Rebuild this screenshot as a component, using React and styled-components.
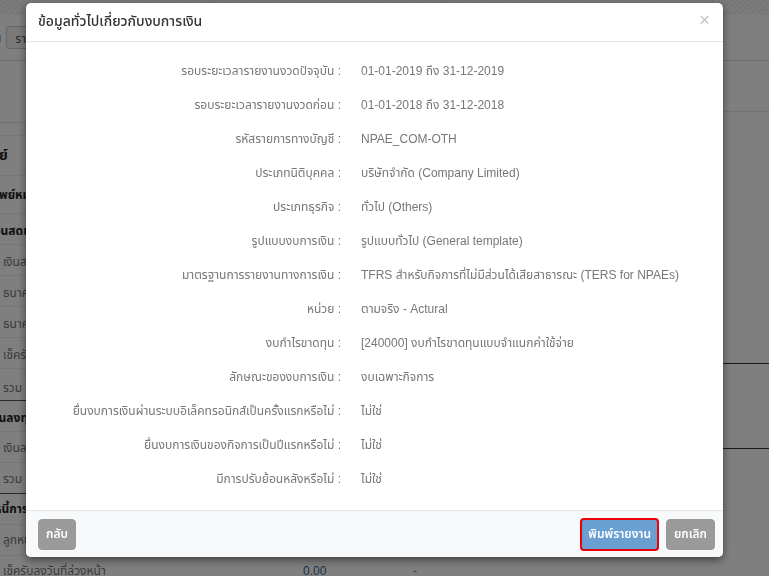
import React from "react";
import styled, { createGlobalStyle } from "styled-components";

const GlobalStyle = createGlobalStyle`
  html, body {
    margin: 0;
    padding: 0;
  }
  body {
    font-family: Tahoma, "Liberation Sans", "Noto Sans Thai", "Noto Sans", sans-serif;
    background: #ffffff;
  }
`;

const Page = styled.div`
  width: 769px;
  height: 576px;
  overflow: hidden;
  background: #ffffff;
`;

const TopStrip = styled.div`
  height: 15px;
  background: repeating-linear-gradient(
    135deg,
    #eeeeee 0px,
    #eeeeee 2px,
    #f8f8f8 2px,
    #f8f8f8 4px
  );
`;

const Toolbar = styled.div`
  display: flex;
  align-items: center;
  gap: 5px;
  height: 45px;
  border-bottom: 1px solid #dddddd;
  font-size: 12px;
`;

const ToolLink = styled.span`
  color: #3b7dc4;
  margin-left: -6px;
`;

const ToolInput = styled.div`
  width: 60px;
  height: 23px;
  border: 1px solid #cccccc;
  border-radius: 3px;
  background: #f5f5f5;
  padding: 3px 8px;
  box-sizing: border-box;
  color: #555555;
`;

const Content = styled.div`
  display: grid;
  grid-template-columns: 1fr 60px;
`;

const Table = styled.div`
  display: flex;
  flex-direction: column;
`;

const Filler = styled.div`
  height: 61px;
  border-bottom: 1px solid #e4e4e4;
  margin-bottom: 12px;
`;

const TRow = styled.div`
  display: flex;
  align-items: center;
  box-sizing: border-box;
  height: ${(p) => p.$h}px;
  padding-top: ${(p) => p.$pt}px;
  border-top: 1px solid ${(p) => (p.$strong ? "#555555" : "#eeeeee")};
  font-size: ${(p) => (p.$big ? 14 : 12)}px;
  color: ${(p) => (p.$head ? "#222222" : "#777777")};
  font-weight: ${(p) => (p.$head ? 700 : 400)};
  white-space: nowrap;
`;

const TLabel = styled.span`
  width: 300px;
  flex: none;
  margin-left: ${(p) => p.$indent}px;
`;

const TAmount = styled.span`
  width: 110px;
  color: #3a5f99;
`;

const SidePanel = styled.div`
  display: flex;
  flex-direction: column;
`;

const SideRow = styled.div`
  height: ${(p) => p.$h}px;
  border-bottom: 1px solid ${(p) => (p.$strong ? "#333333" : "#e4e4e4")};
`;

const Backdrop = styled.div`
  position: fixed;
  inset: 0;
  background: rgba(0, 0, 0, 0.5);
  padding: 3px 0 0 26px;
`;

const Modal = styled.div`
  width: 697px;
  background: #ffffff;
  border-radius: 5px;
  box-shadow: 0 3px 9px rgba(0, 0, 0, 0.5);
  overflow: hidden;
`;

const Header = styled.div`
  display: flex;
  align-items: center;
  justify-content: space-between;
  height: 38px;
  padding: 0 13px 0 12px;
  border-bottom: 1px solid #e5e5e5;
`;

const Title = styled.h4`
  margin: -2px 0 0;
  font-size: 14px;
  font-weight: 500;
  color: #333333;
`;

const Close = styled.span`
  font-size: 19px;
  line-height: 1;
  margin-top: -5px;
  color: #c4c4c4;
  font-family: "Liberation Sans", sans-serif;
`;

const Body = styled.div`
  padding: 12px 0 14px;
`;

const InfoRow = styled.div`
  display: grid;
  grid-template-columns: 315px 1fr;
  column-gap: 20px;
  align-items: center;
  height: 34px;
  font-size: 12px;
  color: #777777;
`;

const InfoLabel = styled.div`
  text-align: right;
`;

const InfoValue = styled.div`
  color: #777777;
`;

const Footer = styled.div`
  display: flex;
  align-items: center;
  height: 46px;
  padding: 0 8px 0 12px;
  background: #f8f9fa;
  border-top: 1px solid #e5e5e5;
  gap: 7px;
`;

const Button = styled.button`
  height: ${(p) => (p.$primary ? 33 : 31)}px;
  padding: 0 ${(p) => (p.$primary ? 6 : 7)}px;
  border-radius: 4px;
  border: ${(p) => (p.$primary ? "2px solid #e8000b" : "1px solid #999999")};
  background: ${(p) => (p.$primary ? "#6a9fd2" : "#9a9a9a")};
  color: #ffffff;
  font-family: inherit;
  font-size: 12px;
  font-weight: 600;
  margin-left: ${(p) => (p.$push ? "auto" : "0")};
`;

const rows = [
  ["รอบระยะเวลารายงานงวดปัจจุบัน", "01-01-2019 ถึง 31-12-2019"],
  ["รอบระยะเวลารายงานงวดก่อน", "01-01-2018 ถึง 31-12-2018"],
  ["รหัสรายการทางบัญชี", "NPAE_COM-OTH"],
  ["ประเภทนิติบุคคล", "บริษัทจำกัด (Company Limited)"],
  ["ประเภทธุรกิจ", "ทั่วไป (Others)"],
  ["รูปแบบงบการเงิน", "รูปแบบทั่วไป (General template)"],
  ["มาตรฐานการรายงานทางการเงิน", "TFRS สำหรับกิจการที่ไม่มีส่วนได้เสียสาธารณะ (TERS for NPAEs)"],
  ["หน่วย", "ตามจริง - Actural"],
  ["งบกำไรขาดทุน", "[240000] งบกำไรขาดทุนแบบจำแนกค่าใช้จ่าย"],
  ["ลักษณะของงบการเงิน", "งบเฉพาะกิจการ"],
  ["ยื่นงบการเงินผ่านระบบอิเล็คทรอนิกส์เป็นครั้งแรกหรือไม่", "ไม่ใช่"],
  ["ยื่นงบการเงินของกิจการเป็นปีแรกหรือไม่", "ไม่ใช่"],
  ["มีการปรับย้อนหลังหรือไม่", "ไม่ใช่"],
];

const tableRows = [
  { label: "สินทรัพย์", head: true, big: true, indent: -45, h: 40 },
  { label: "สินทรัพย์หมุนเวียน", head: true, indent: -30, h: 38 },
  { label: "เงินสดและรายการเทียบเท่าเงินสด", head: true, indent: -10, h: 31, pt: 3 },
  { label: "เงินสด", indent: 3, h: 31, pt: 4 },
  { label: "ธนาคาร - กระแสรายวัน", indent: 3, h: 31, pt: 4 },
  { label: "ธนาคาร - ออมทรัพย์", indent: 3, h: 31, pt: 4 },
  { label: "เช็ครับที่ยังไม่นำฝาก", indent: 3, h: 31, pt: 4 },
  { label: "รวม เงินสดและรายการเทียบเท่าเงินสด", indent: 3, h: 32, pt: 6 },
  { label: "เงินลงทุนชั่วคราว", head: true, indent: -12, h: 31, pt: 3, strong: true },
  { label: "เงินลงทุนระยะสั้น", indent: 3, h: 31, pt: 1 },
  { label: "รวม เงินลงทุนชั่วคราว", indent: 3, h: 31, pt: 1 },
  { label: "หนี้การค้าและลูกหนี้อื่น", head: true, indent: -6, h: 31, pt: -5, strong: true },
  { label: "ลูกหนี้การค้า", indent: 3, h: 31, pt: -2 },
  { label: "เช็ครับลงวันที่ล่วงหน้า", indent: 3, h: 31, pt: 0, amount: "0.00", dash: "-" },
];

const App = () => {
  return (
    <>
      <GlobalStyle />
      <Page>
        <TopStrip />
        <Toolbar>
          <ToolLink>น</ToolLink>
          <ToolInput>รายการ</ToolInput>
        </Toolbar>
        <Content>
          <Table>
            <Filler />
            {tableRows.map((r) => (
              <TRow
                key={r.label}
                $head={r.head}
                $big={r.big}
                $strong={r.strong}
                $h={r.h}
                $pt={r.pt || 0}
              >
                <TLabel $indent={r.indent}>{r.label}</TLabel>
                {r.amount && <TAmount>{r.amount}</TAmount>}
                {r.dash && <span>{r.dash}</span>}
              </TRow>
            ))}
          </Table>
          <SidePanel>
            <SideRow $h={50} />
            <SideRow $h={251} $strong />
            <SideRow $h={84} $strong />
          </SidePanel>
        </Content>
      </Page>
      <Backdrop>
        <Modal>
          <Header>
            <Title>ข้อมูลทั่วไปเกี่ยวกับงบการเงิน</Title>
            <Close>×</Close>
          </Header>
          <Body>
            {rows.map(([label, value]) => (
              <InfoRow key={label}>
                <InfoLabel>{label} :</InfoLabel>
                <InfoValue>{value}</InfoValue>
              </InfoRow>
            ))}
          </Body>
          <Footer>
            <Button>กลับ</Button>
            <Button $primary $push>พิมพ์รายงาน</Button>
            <Button>ยกเลิก</Button>
          </Footer>
        </Modal>
      </Backdrop>
    </>
  );
};

export default App;
